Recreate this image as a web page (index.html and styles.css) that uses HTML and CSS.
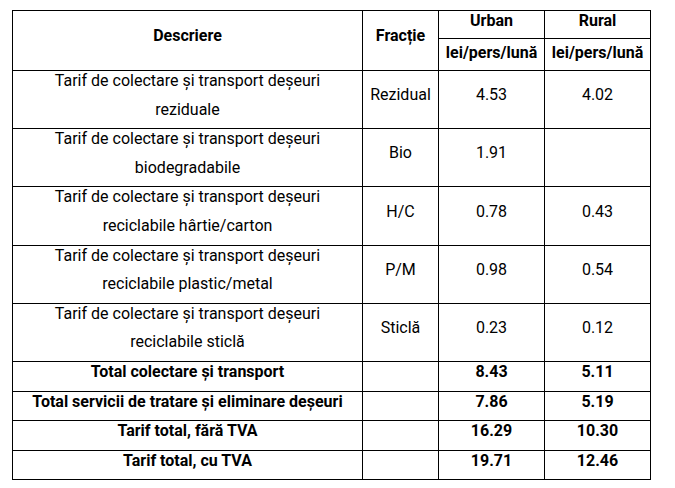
FILE: index.html
```html
<!DOCTYPE html>
<html lang="ro">
<head>
<meta charset="utf-8">
<title>Tarife</title>
<link rel="stylesheet" href="styles.css">
</head>
<body>
<div class="page">
<table class="tarife">
  <colgroup>
    <col class="c-desc">
    <col class="c-frac">
    <col class="c-val">
    <col class="c-val2">
  </colgroup>
  <thead>
    <tr class="h1">
      <th rowspan="2" class="hd-big">Descriere</th>
      <th rowspan="2" class="hd-big">Fracție</th>
      <th class="hd-top">Urban</th>
      <th class="hd-top">Rural</th>
    </tr>
    <tr class="h2">
      <th class="hd-unit">lei/pers/lună</th>
      <th class="hd-unit">lei/pers/lună</th>
    </tr>
  </thead>
  <tbody>
    <tr>
      <td class="desc"><span class="t">Tarif de colectare și transport deșeuri reziduale</span></td>
      <td class="frac"><span class="t">Rezidual</span></td>
      <td><span class="t">4.53</span></td>
      <td><span class="t">4.02</span></td>
    </tr>
    <tr>
      <td class="desc"><span class="t">Tarif de colectare și transport deșeuri biodegradabile</span></td>
      <td class="frac"><span class="t">Bio</span></td>
      <td><span class="t">1.91</span></td>
      <td></td>
    </tr>
    <tr>
      <td class="desc"><span class="t">Tarif de colectare și transport deșeuri reciclabile hârtie/carton</span></td>
      <td class="frac"><span class="t">H/C</span></td>
      <td><span class="t">0.78</span></td>
      <td><span class="t">0.43</span></td>
    </tr>
    <tr>
      <td class="desc"><span class="t">Tarif de colectare și transport deșeuri reciclabile plastic/metal</span></td>
      <td class="frac"><span class="t">P/M</span></td>
      <td><span class="t">0.98</span></td>
      <td><span class="t">0.54</span></td>
    </tr>
    <tr>
      <td class="desc"><span class="t">Tarif de colectare și transport deșeuri reciclabile sticlă</span></td>
      <td class="frac"><span class="t">Sticlă</span></td>
      <td><span class="t">0.23</span></td>
      <td><span class="t">0.12</span></td>
    </tr>
    <tr class="tot">
      <td class="desc-tot"><span class="t">Total colectare și transport</span></td>
      <td></td>
      <td><span class="t">8.43</span></td>
      <td><span class="t">5.11</span></td>
    </tr>
    <tr class="tot">
      <td class="desc-tot"><span class="t">Total servicii de tratare și eliminare deșeuri</span></td>
      <td></td>
      <td><span class="t">7.86</span></td>
      <td><span class="t">5.19</span></td>
    </tr>
    <tr class="tot">
      <td class="desc-tot"><span class="t">Tarif total, fără TVA</span></td>
      <td></td>
      <td><span class="t">16.29</span></td>
      <td><span class="t">10.30</span></td>
    </tr>
    <tr class="tot">
      <td class="desc-tot"><span class="t">Tarif total, cu TVA</span></td>
      <td></td>
      <td><span class="t">19.71</span></td>
      <td><span class="t">12.46</span></td>
    </tr>
  </tbody>
</table>
</div>
</body>
</html>
```

FILE: styles.css
```css
html, body {
  margin: 0;
  padding: 0;
  background: #ffffff;
}

.page {
  padding: 10px 0 0 12px;
}

.tarife {
  border-collapse: collapse;
  table-layout: fixed;
  width: 638px;
  font-family: Roboto, "Liberation Sans", sans-serif;
  font-size: 16px;
  color: #000000;
}

.c-desc { width: 350px; }
.c-frac { width: 76px; }
.c-val { width: 106px; }
.c-val2 { width: 106px; }

.tarife th,
.tarife td {
  border: 1px solid #000000;
  padding: 0;
  text-align: center;
}

.tarife th {
  font-weight: 700;
  line-height: normal;
  vertical-align: middle;
}

.tarife .hd-big {
  padding-bottom: 10px;
}

.tarife .h1 {
  height: 28px;
}

.tarife .hd-top {
  padding-bottom: 8px;
}

.tarife .h2 {
  height: 32px;
}

.tarife .hd-unit {
  padding-bottom: 4px;
}

.tarife td {
  line-height: 28.6px;
  vertical-align: middle;
}

.tarife .t {
  vertical-align: top;
  line-height: 20px;
}

.tarife .desc {
  padding: 0 12px;
}

.tarife .frac {
  padding: 0 3px;
}

.tarife .tot td {
  font-weight: 700;
}

.tarife .tot .t {
  line-height: 19px;
}

.tarife .desc-tot {
  padding: 0 4px;
}
```
